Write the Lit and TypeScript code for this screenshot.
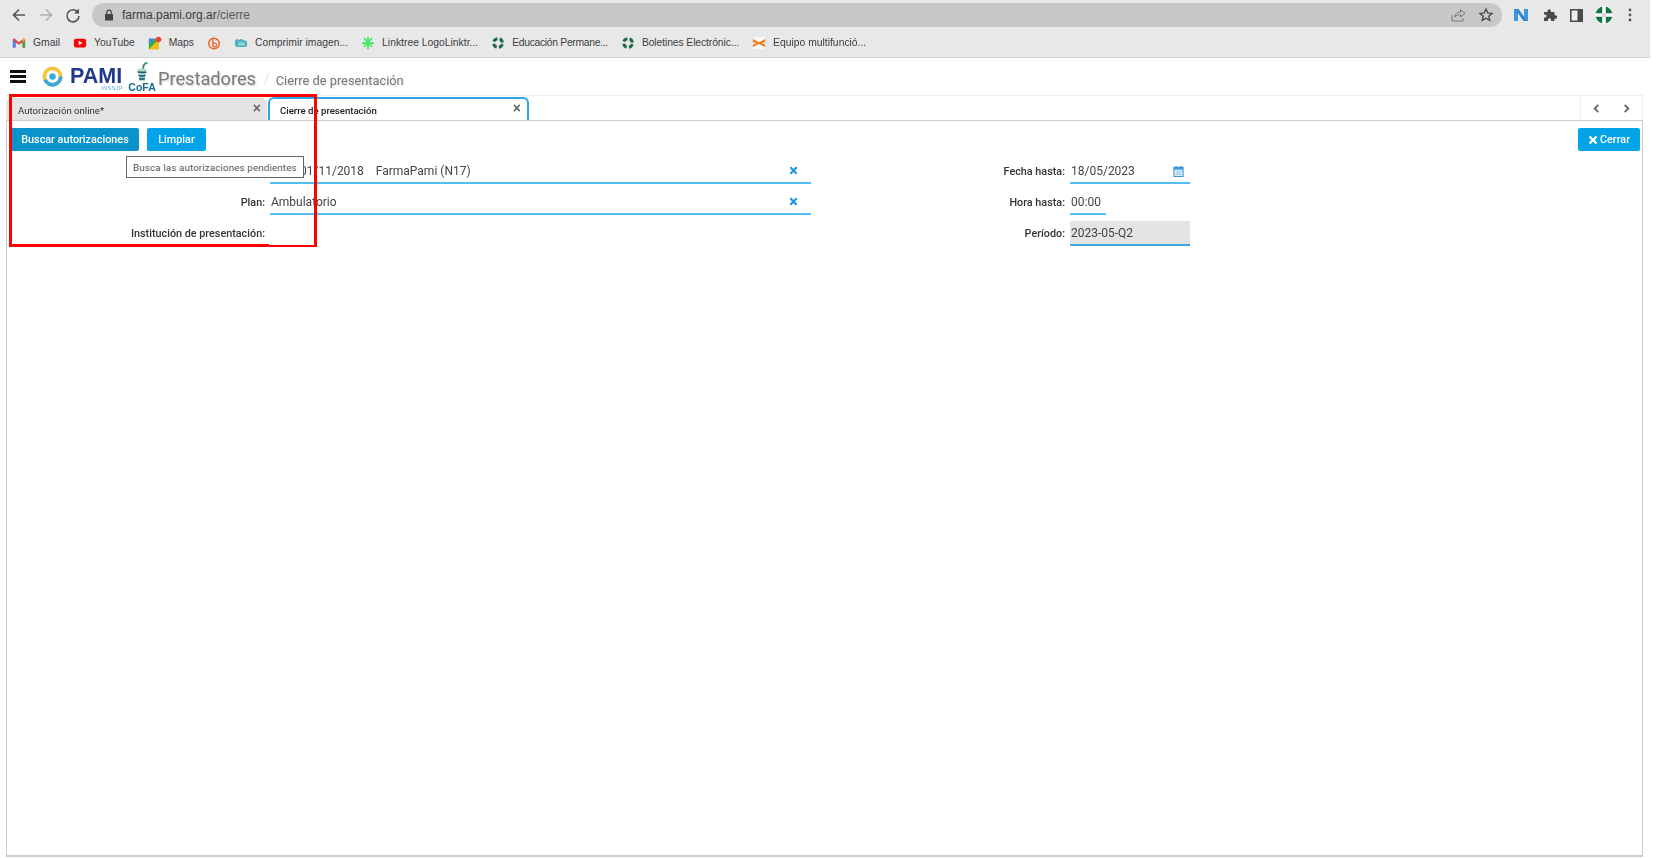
import { LitElement, html, css, svg } from "lit";
import { customElement } from "lit/decorators.js";

const cross = svg`<g fill="#fff"><circle cx="8" cy="8" r="7.5" fill="#14733f"/><path d="M6.4 0h3.2v16H6.4zM0 6.4h16v3.2H0z"/><circle cx="8" cy="8" r="2" fill="#d8d8d8"/></g>`;
const ring = svg`<g fill="none" stroke="#1d6b45" stroke-width="3.4" stroke-dasharray="5.2 2.65" stroke-dashoffset="-1.325"><circle cx="8" cy="8" r="5"/></g>`;

const bookmarks = [
  { t: "Gmail", s: 0, i: svg`<path d="M1 4v9h3V7l4 3 4-3v6h3V4l-1.5-1.5L8 7 2.500 2.500z" fill="#ea4335"/><path d="M1 4v9h3V7z" fill="#4285f4"/><path d="M15 4v9h-3V7z" fill="#34a853"/><path d="M12 7V3.500L13.500 2.500 15 4z" fill="#fbbc04"/>` },
  { t: "YouTube", s: 0, i: svg`<rect x="1" y="3" width="14" height="10" rx="2.500" fill="#f00"/><path d="M6.500 5.500v5L11 8z" fill="#fff"/>` },
  { t: "Maps", s: 0, i: svg`<path d="M1 3h11v12H1z" fill="#34a853"/><path d="M1 15 12 4v11z" fill="#fbbc04"/><path d="M1 3h6L1 9z" fill="#4285f4"/><circle cx="12" cy="4" r="3.200" fill="#ea4335"/>` },
  { t: "", s: 0, i: svg`<circle cx="8" cy="8.500" r="6" fill="none" stroke="#ee6123" stroke-width="1.600"/><path d="M6.500 3.500v7a2.200 2.200 0 1 0 .2-1.200" fill="none" stroke="#ee6123" stroke-width="1.400"/>` },
  { t: "Comprimir imagen...", s: 0, i: svg`<path d="M1 6a3 3 0 0 1 5-1.500A3.500 3.500 0 0 1 11 5a3 3 0 0 1 4 3v2a2.500 2.500 0 0 1-2.500 2.500h-9A3 3 0 0 1 1 9.500z" fill="#4fb3bf"/><path d="M5 8h7M5 10h7" stroke="#d6f0f2" stroke-width="1"/>` },
  { t: "Linktree LogoLinktr...", s: 0, i: svg`<path d="M7 1h2v14H7zM1 7h14v2H1z" fill="#43e660"/><path d="m3 3 1.400-1.400 9 10L12 13zM13 3l-1.400-1.400-9 10L4 13z" fill="#43e660"/>` },
  { t: "Educación Permane...", s: -0.3, i: ring },
  { t: "Boletines Electrónic...", s: -0.1, i: ring },
  { t: "Equipo multifunció...", s: 0, i: svg`<rect x="1" y="1" width="14" height="14" fill="#f6f6f6"/><path d="M1 3.500 8 7l7-3.500V7L10.500 8 15 10v2.500L8 9l-7 3.500V10l4.500-2L1 7z" fill="#f07a18"/>` },
];

@customElement("app-root")
export class AppRoot extends LitElement {
  static styles = css`
    :host { display: block; width: 1657px; height: 858px; position: relative; overflow: hidden; background: #fff; font-family: Roboto, "Liberation Sans", sans-serif; }
    .soft { filter: blur(0.4px); height: 858px; display: flex; flex-direction: column; }
    .chrome { width: 1650px; height: 58px; flex: none; background: #e8e8e8; border-bottom: 1px solid #d2d2d2; box-sizing: border-box; font-family: "Liberation Sans", sans-serif; }
    .top { height: 29px; display: flex; align-items: center; padding: 1px 0 0 10px; box-sizing: border-box; }
    .nav { width: 18px; height: 18px; margin-right: 9px; flex: none; }
    .omni { margin-left: 1px; width: 1410px; height: 24px; border-radius: 12px; background: #c8c8c8; display: flex; align-items: center; padding: 0 8px 0 12px; box-sizing: border-box; flex: none; color: #5a5a5a; font-size: 12px; gap: 8px; }
    .omni b { font-weight: 400; color: #3c3c3c; }
    .spacer { flex: 1; }
    .ticons { display: flex; align-items: center; }
    .bm { height: 27px; display: flex; align-items: center; gap: 13px; padding-left: 12px; font-size: 10.350px; color: #3c4043; }
    .bm div { display: flex; align-items: center; gap: 7px; white-space: nowrap; }
    .bm svg { width: 14px; height: 14px; flex: none; }
    .head { height: 37px; flex: none; display: flex; align-items: center; position: relative; padding-left: 10px; }
    .burger { width: 16px; height: 13px; border-top: 3px solid #111; border-bottom: 3px solid #111; box-sizing: border-box; position: relative; flex: none; }
    .burger::after { content: ""; position: absolute; left: 0; right: 0; top: 2px; height: 3px; background: #111; }
    .pami { width: 21px; height: 21px; margin-left: 16px; flex: none; }
    .brand { margin-left: 7px; width: 53px; flex: none; color: #1f3a8c; font-weight: 900; font-size: 21.500px; line-height: 20px; font-family: "Liberation Sans", sans-serif; position: relative; top: 2px; }
    .brand small { display: block; font-size: 5.500px; line-height: 5px; text-align: right; font-weight: 400; color: #5aa7dc; letter-spacing: .4px; }
    .cofa { width: 26px; height: 31px; margin-left: 6px; flex: none; display: flex; flex-direction: column; align-items: center; position: relative; top: 1px; }
    .cofa svg { width: 18px; height: 20px; flex: none; }
    .cofa span { font: 900 10.500px/10px "Liberation Sans", sans-serif; color: #146a8c; }
    .prest { margin-left: 3px; font-size: 18.200px; color: #7b7b7b; text-shadow: 1px 1px 2px #ccc; position: relative; top: 2px; }
    .slash { margin-left: 8px; color: #e2e2e2; font-size: 14px; position: relative; top: 2px; }
    .crumb { margin-left: 6px; font-size: 12.800px; color: #777; text-shadow: 1px 1px 2px #ddd; position: relative; top: 4px; }
    .tabs { margin: 0 14px 0 6px; height: 25px; flex: none; border-top: 1px solid #eee; border-right: 1px solid #eee; display: flex; box-sizing: border-box; align-items: flex-end; }
    .tab { height: 22px; box-sizing: border-box; border-radius: 6px 6px 0 0; font-size: 9.600px; display: flex; align-items: center; justify-content: space-between; flex: none; color: #333; padding-top: 1px; }
    .t1 { width: 261px; background: #e4e4e4; padding-left: 12px; padding-right: 6px; border-top: 1px solid #d8d8d8; }
    .t2 { width: 261px; height: 23px; background: #fff; border: 2px solid #2ea4e6; border-bottom: none; padding-left: 10px; padding-right: 6px; font-weight: 500; color: #222; margin-left: 1px; }
    .tab i { font: normal 700 14px/1 "Liberation Sans", sans-serif; color: #666; position: relative; top: -2px; }
    .tnav { margin-left: auto; width: 62px; height: 100%; border-left: 1px solid #eee; display: flex; align-items: center; justify-content: space-around; box-sizing: border-box; }
    .tnav svg { width: 9px; height: 9px; }
    .panel { margin: 0 14px 1px 6px; flex: 1; border: 1px solid #ccc; border-bottom-width: 2px; position: relative; box-sizing: border-box; }
    .actions { display: flex; gap: 8px; padding: 7px 2px 0 4px; }
    .btn { height: 23px; box-sizing: border-box; border-radius: 2px; background: #04a3e8; color: #fff; font-size: 10.800px; font-weight: 500; display: flex; align-items: center; justify-content: center; flex: none; }
    .b1 { width: 128px; background: #0b94cc; }
    .b2 { width: 59px; }
    .b3 { width: 62px; margin-left: auto; gap: 2px; }
    .b3 svg { width: 10px; height: 10px; }
    .form { display: grid; grid-template-columns: 258px 541px 249px 120px; column-gap: 5px; margin-top: 2px; font-size: 12px; color: #444; grid-auto-rows: 31px; }
    .l { font-size: 10.800px; font-weight: 500; color: #333; text-align: right; display: flex; align-items: center; justify-content: flex-end; padding-top: 5px; box-sizing: border-box; }
    .f { border-bottom: 2px solid #56bdf0; display: flex; align-items: center; justify-content: space-between; padding: 6px 13px 0 1px; box-sizing: border-box; white-space: pre; background: #fff; }
    .f span.off { margin-left: 29px; }
    .f svg { width: 9px; height: 9px; }
    .cal { padding-right: 6px; }
    .cal svg { width: 11px; height: 12px; }
    .short { width: 36px; height: 100%; }
    .ro { background: #e4e4e4; border-bottom-color: #3fa8dc; margin-top: 6px; padding-top: 0; }
    .none { border-bottom: none; height: 29px; }
    .tip { position: absolute; left: 119px; top: 35px; width: 178px; height: 22px; box-sizing: border-box; background: #fff; border: 1px solid #666; font-size: 9.750px; letter-spacing: .15px; color: #555; display: flex; align-items: center; padding-left: 6px; white-space: nowrap; z-index: 2; }
    .mark { position: absolute; left: 9px; top: 94px; width: 308px; height: 153px; border: 3px solid #f00; box-sizing: border-box; z-index: 2; }
    .mark::after { content: ""; position: absolute; left: 257px; right: 0; bottom: -1px; height: 1px; background: #fff; }
  `;
  render() {
    const xIcon = html`<svg viewBox="0 0 10 10"><path d="M1.500 1.500l7 7m0-7l-7 7" stroke="#1f96e0" stroke-width="2.400" fill="none"/></svg>`;
    return html`
      <div class="soft">
        <div class="chrome">
          <div class="top">
            <svg class="nav" viewBox="0 0 18 18"><path d="M15 9H4m5-5.500L3.500 9 9 14.500" fill="none" stroke="#555" stroke-width="1.600"/></svg>
            <svg class="nav" viewBox="0 0 18 18"><path d="M3 9h11M9 3.500 14.500 9 9 14.500" fill="none" stroke="#b0b0b0" stroke-width="1.600"/></svg>
            <svg class="nav" viewBox="0 0 18 18"><path d="M14 6.500A6 6 0 1 0 15 10" fill="none" stroke="#555" stroke-width="1.600"/><path d="M15 2.500v5h-5z" fill="#555"/></svg>
            <div class="omni">
              <svg width="10" height="12" viewBox="0 0 10 12"><path d="M1 5h8v6.500H1z" fill="#444"/><path d="M2.800 5V3.300a2.200 2.200 0 0 1 4.400 0V5" fill="none" stroke="#444" stroke-width="1.200"/></svg>
              <span><b>farma.pami.org.ar</b>/cierre</span>
              <span class="spacer"></span>
              <svg width="16" height="16" viewBox="0 0 16 16"><path d="M2 8v6h11v-3M4.500 10c.5-3 3-5 6-5V2.500L15 6.500 10.500 10V7.800c-2.500 0-4.500.7-6 2.200z" fill="none" stroke="#777" stroke-width="1"/></svg>
              <svg style="margin-left:4px" width="16" height="16" viewBox="0 0 16 16"><path d="m8 2 1.800 4 4.200.4-3.200 2.800 1 4.300L8 11.200 4.200 13.500l1-4.300L2 6.400 6.200 6z" fill="none" stroke="#444" stroke-width="1.300"/></svg>
            </div>
            <div class="ticons">
              <svg style="margin-left:11px" width="16" height="16" viewBox="0 0 16 16"><path d="M1 2h4v12H1zM11 2h4v12h-4z" fill="#3f96dc"/><path d="M2 2h3.500l8.500 12h-3.500z" fill="#2f86cc"/></svg>
              <svg style="margin-left:14px" width="14" height="14" viewBox="0 0 14 14"><path d="M1 4h3.500V3a1.700 1.700 0 0 1 3.400 0v1H11.500v3.300h1a1.700 1.700 0 0 1 0 3.400h-1V13H8V11.700a1.500 1.500 0 0 0-3 0V13H1V9.500h1a1.500 1.500 0 0 0 0-3H1z" fill="#4a4a4a"/></svg>
              <svg style="margin-left:13px" width="13" height="13" viewBox="0 0 13 13"><path d="M.8.8h11.400v11.400H.8z" fill="#eee" stroke="#4a4a4a" stroke-width="1.600"/><path d="M7.500 1h5v11h-5z" fill="#4a4a4a"/></svg>
              <svg style="margin-left:12px" width="18" height="18" viewBox="0 0 16 16">${cross}</svg>
              <svg style="margin-left:15px" width="4" height="14" viewBox="0 0 4 14"><circle cx="2" cy="2" r="1.400" fill="#555"/><circle cx="2" cy="7" r="1.400" fill="#555"/><circle cx="2" cy="12" r="1.400" fill="#555"/></svg>
            </div>
          </div>
          <div class="bm">
            ${bookmarks.map((b) => html`<div><svg viewBox="0 0 16 16">${b.i}</svg>${b.t ? html`<span style="letter-spacing:${b.s}px">${b.t}</span>` : ""}</div>`)}
          </div>
        </div>
        <div class="head">
          <div class="burger"></div>
          <svg class="pami" viewBox="0 0 22 22"><circle cx="11" cy="11" r="8.500" fill="none" stroke="#f5c542" stroke-width="4"/><path d="M3.200 14.500A8.500 8.500 0 0 0 19.500 11" fill="none" stroke="#39a9e0" stroke-width="4"/><circle cx="11" cy="11" r="3.400" fill="#39a9e0"/></svg>
          <div class="brand">PAMI<small>INSSJP</small></div>
          <div class="cofa">
            <svg viewBox="0 0 16 18"><path d="M4 6h8l-1.500 11h-5z" fill="#b8d8c8"/><path d="M9 6c0-3 1-5 4-5" fill="none" stroke="#3f9a5a" stroke-width="1.800"/><path d="M4 9c3 0 5 1 8 0M5 12c2 1 4 1 6 0M5.500 15c2 .6 3 .6 5 0" stroke="#17607a" stroke-width="1.500" fill="none"/></svg>
            <span>CoFA</span>
          </div>
          <div class="prest">Prestadores</div>
          <div class="slash">/</div>
          <div class="crumb">Cierre de presentación</div>
        </div>
        <div class="tabs">
          <div class="tab t1"><span>Autorización online*</span><i>×</i></div>
          <div class="tab t2"><span>Cierre de presentación</span><i>×</i></div>
          <div class="tnav">
            <svg viewBox="0 0 10 10"><path d="M7 1 3 5l4 4" fill="none" stroke="#666" stroke-width="2"/></svg>
            <svg viewBox="0 0 10 10"><path d="m3 1 4 4-4 4" fill="none" stroke="#666" stroke-width="2"/></svg>
          </div>
        </div>
        <div class="panel">
          <div class="actions">
            <div class="btn b1">Buscar autorizaciones</div>
            <div class="btn b2">Limpiar</div>
            <div class="btn b3"><svg viewBox="0 0 10 10"><path d="M1.500 1.500l7 7m0-7l-7 7" stroke="#fff" stroke-width="2.400" fill="none"/></svg>Cerrar</div>
          </div>
          <div class="tip">Busca las autorizaciones pendientes</div>
          <div class="form">
            <div class="l"></div>
            <div class="f"><span class="off">01/11/2018    FarmaPami (N17)</span>${xIcon}</div>
            <div class="l">Fecha hasta:</div>
            <div class="f cal"><span>18/05/2023</span><svg viewBox="0 0 12 13"><path d="M1 2.500h10v10H1z" fill="#d6e9fa" stroke="#3f96dc" stroke-width="1.200"/><path d="M1 2.500h10v2.500H1z" fill="#3f96dc"/><path d="M3.500 1v2M8.500 1v2" stroke="#3f96dc" stroke-width="1.400"/><path d="M3 7.500h6M3 10h6" stroke="#8fc2ec"/></svg></div>
            <div class="l">Plan:</div>
            <div class="f"><span>Ambulatorio</span>${xIcon}</div>
            <div class="l">Hora hasta:</div>
            <div><div class="f short">00:00</div></div>
            <div class="l">Institución de presentación:</div>
            <div class="f none"></div>
            <div class="l">Período:</div>
            <div class="f ro"><span>2023-05-Q2</span></div>
          </div>
        </div>
      </div>
      <div class="mark"></div>
    `;
  }
}
